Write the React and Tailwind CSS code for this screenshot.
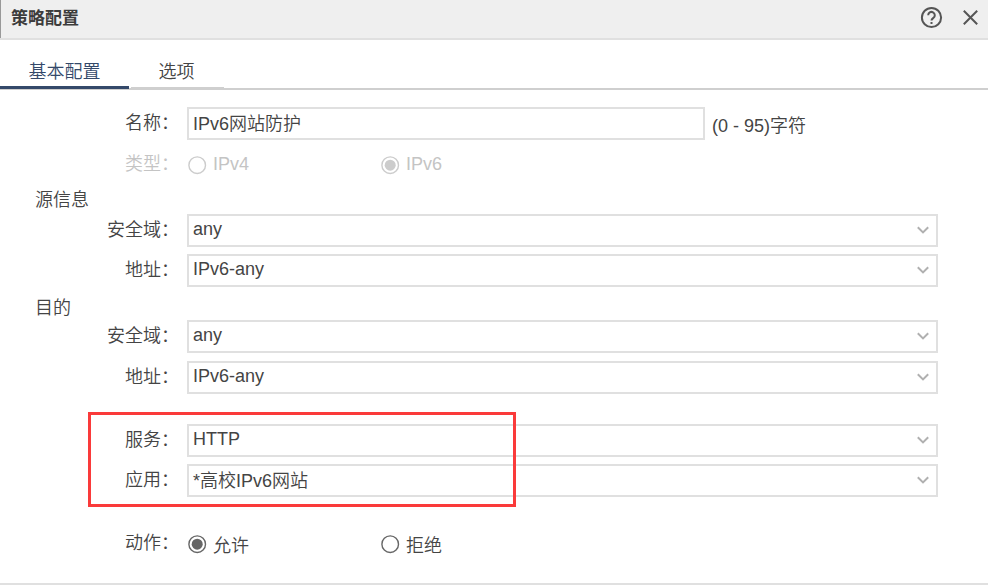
import { useState } from "react";

function Row({ label, muted, className = "", children }) {
  return (
    <div className={`flex h-[33px] ${className}`}>
      <div className={`w-[179px] mr-2 shrink-0 text-right leading-[33px] ${muted ? "text-[#c4c4c4]" : ""}`}>
        {label}：
      </div>
      {children}
    </div>
  );
}

function SelectBox({ value, textClass = "leading-[27px]" }) {
  return (
    <div className="flex w-[751px] justify-between border-2 border-[#e0e0e0] bg-white pl-1 pr-[7px]">
      <span className={textClass}>{value}</span>
      <svg className="mt-2 h-3 w-3" viewBox="0 0 12 12" fill="none" stroke="#b0b0b0" strokeWidth="2">
        <path d="M0.8 3.2 6 8.4 11.2 3.2" />
      </svg>
    </div>
  );
}

function Radio({ label, checked, disabled, onClick, className = "", textClass = "" }) {
  const color = disabled ? "#cccccc" : "#666666";
  return (
    <button type="button" disabled={disabled} onClick={onClick} className={`flex items-center ${className}`}>
      <svg className="mr-[6px] h-5 w-5 shrink-0" viewBox="0 0 20 20">
        <circle cx="10.2" cy="10.2" r="8.3" fill="none" stroke={color} strokeWidth="1.4" />
        {checked && <circle cx="10.2" cy="10.2" r="5.5" fill={color} />}
      </svg>
      <span className={textClass}>{label}</span>
    </button>
  );
}

export default function App() {
  const [tab, setTab] = useState("basic");
  const [name, setName] = useState("IPv6网站防护");
  const [action, setAction] = useState("allow");

  return (
    <div className="flex h-[585px] w-[988px] flex-col overflow-hidden border-b-2 border-[#e0e0e0] bg-white font-['Liberation_Sans','Noto_Sans_CJK_SC',sans-serif] text-[18px] font-[350] text-[#444]">
      <header className="flex h-10 shrink-0 justify-between border-b-2 border-[#e0e0e0] bg-[#efefef]">
        <div className="border-l border-[#999] pl-[10px] text-[17px] font-bold leading-[37px] text-[#3c3c3c]">策略配置</div>
        <div className="flex pr-[9px] pt-[6px]">
          <svg className="mr-[19px] h-[23px] w-[23px]" viewBox="0 0 23 23" fill="none" stroke="#555" strokeWidth="2">
            <circle cx="11.5" cy="11.5" r="9.6" />
            <path d="M8.2 9.2a3.3 3.3 0 1 1 5.2 2.7c-1.2.9-1.9 1.3-1.9 2.7" />
            <path d="M11.5 16v2" />
          </svg>
          <svg className="mt-[3px] h-[17px] w-[17px]" viewBox="0 0 17 17" fill="none" stroke="#555" strokeWidth="2">
            <path d="M1.8 1.8 15.2 15.2M15.2 1.8 1.8 15.2" />
          </svg>
        </div>
      </header>

      <nav className="flex h-[50px] shrink-0 border-b-2 border-[#cfcfcf]">
        <button
          type="button"
          onClick={() => setTab("basic")}
          className={`relative h-[49px] w-[129px] pt-[18px] ${tab === "basic" ? "border-b-3 border-[#34496a] text-[#34496a]" : "border-b border-[#cfcfcf]"}`}
        >
          基本配置
        </button>
        <button
          type="button"
          onClick={() => setTab("options")}
          className={`ml-[2px] w-[93px] pt-[17px] pr-[2px] ${tab === "options" ? "border-b-3 border-[#34496a] text-[#34496a]" : "border-b border-[#cfcfcf]"}`}
        >
          选项
        </button>
      </nav>

      <main className="relative pt-[17px]">
        <Row label="名称">
          <input
            value={name}
            onChange={(e) => setName(e.target.value)}
            className="w-[518px] border-2 border-[#e0e0e0] bg-white pl-1 pt-[2px] outline-none"
          />
          <span className="ml-[7px] leading-[39px]">(0 - 95)字符</span>
        </Row>
        <Row label="类型" muted className="mt-2">
          <Radio label="IPv4" disabled className="w-[193px] text-[#c4c4c4]" />
          <Radio label="IPv6" disabled checked className="text-[#c4c4c4]" />
        </Row>

        <h2 className="h-[33px] pl-[35px] leading-[39px]">源信息</h2>
        <Row label="安全域">
          <SelectBox value="any" />
        </Row>
        <Row label="地址" className="mt-[7px]">
          <SelectBox value="IPv6-any" />
        </Row>

        <h2 className="h-[33px] pl-[35px] leading-[42px]">目的</h2>
        <Row label="安全域">
          <SelectBox value="any" />
        </Row>
        <Row label="地址" className="mt-2">
          <SelectBox value="IPv6-any" />
        </Row>

        <Row label="服务" className="mt-[30px]">
          <SelectBox value="HTTP" />
        </Row>
        <Row label="应用" className="mt-[7px]">
          <SelectBox value="*高校IPv6网站" textClass="leading-[31px]" />
        </Row>

        <Row label="动作" className="mt-[30px]">
          <Radio
            label="允许"
            checked={action === "allow"}
            onClick={() => setAction("allow")}
            className="w-[193px]"
            textClass="pt-[6px]"
          />
          <Radio label="拒绝" checked={action === "deny"} onClick={() => setAction("deny")} textClass="pt-[6px]" />
        </Row>

        <div className="pointer-events-none absolute left-[88px] top-[322px] h-[95px] w-[428px] border-3 border-[#fa3a3a]" />
      </main>
    </div>
  );
}
